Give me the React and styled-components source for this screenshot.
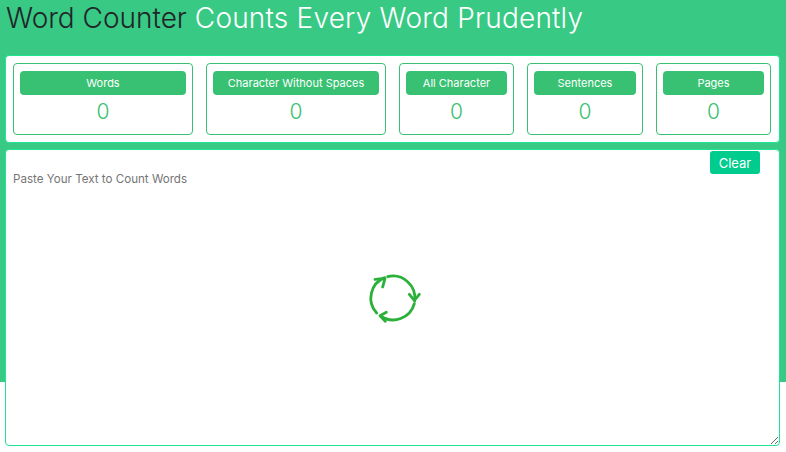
import React from "react";
import styled, { createGlobalStyle } from "styled-components";

const stats = ["Words", "Character Without Spaces", "All Character", "Sentences", "Pages"];

const App = () => {
    return (
        <Page>
            <GlobalStyle />
            <Title>
                Word Counter <TitleAccent>Counts Every Word Prudently</TitleAccent>
            </Title>
            <StatsPanel>
                {stats.map((label) => (
                    <StatCard key={label}>
                        <StatLabel>{label}</StatLabel>
                        <StatValue>0</StatValue>
                    </StatCard>
                ))}
            </StatsPanel>
            <Editor>
                <TextArea placeholder="Paste Your Text to Count Words" />
                <ClearButton>Clear</ClearButton>
                <Spinner viewBox="0 0 210 195" fill="none" stroke="#2bb03a" strokeWidth="8.5" strokeLinecap="round" strokeLinejoin="round">
                    <path d="M83 35A66 66 0 0 1 164 108" />
                    <path d="M148 88L163 106L178 88" />
                    <path d="M163 116A66 66 0 0 1 62 153" />
                    <path d="M79 142L60 152L76 169" />
                    <path d="M50 144A66 66 0 0 1 74 38" />
                    <path d="M45 43L75 40L68 66" />
                </Spinner>
            </Editor>
        </Page>
    );
};

const GlobalStyle = createGlobalStyle`
    body {
        margin: 0;
        background: #fff;
        font-family: "Inter", "Roboto", sans-serif;
    }
`;

const Page = styled.div`
    height: 452px;
    padding: 0 6px 0 5px;
    box-sizing: border-box;
    overflow: hidden;
    background: linear-gradient(#38c985 382px, #fff 382px);
`;

const Title = styled.h1`
    margin: 0;
    height: 55px;
    padding-left: 1px;
    font-size: 28px;
    line-height: 36px;
    font-weight: 300;
    color: #212529;
`;

const TitleAccent = styled.span`
    color: #fff;
    letter-spacing: 0.2px;
`;

const StatsPanel = styled.div`
    display: grid;
    grid-template-columns: 180px 180px 115px 116px 115px;
    gap: 13px;
    box-sizing: border-box;
    height: 88px;
    padding: 7px;
    background: #fff;
    border: 1px solid #1fe593;
    border-radius: 4px;
`;

const StatCard = styled.div`
    display: flex;
    flex-direction: column;
    align-items: stretch;
    padding: 7px 6px;
    border: 1px solid #38c172;
    border-radius: 4px;
`;

const StatLabel = styled.div`
    height: 24px;
    line-height: 24px;
    border-radius: 4px;
    background: #38c172;
    color: #fff;
    font-size: 11px;
    text-align: center;
    white-space: nowrap;
`;

const StatValue = styled.div`
    margin-top: 4px;
    font-size: 21px;
    line-height: 26px;
    font-weight: 300;
    color: #38c172;
    text-align: center;
`;

const Editor = styled.div`
    position: relative;
    margin-top: 6px;
    height: 297px;
`;

const TextArea = styled.textarea`
    display: block;
    width: 100%;
    height: 100%;
    box-sizing: border-box;
    padding: 21px 7px 6px;
    background: #fff;
    border: 1px solid #1fe593;
    border-radius: 4px;
    outline: none;
    font-family: inherit;
    font-size: 11.6px;
    line-height: 16px;
    color: #495057;
    &::placeholder {
        color: #757575;
        opacity: 1;
    }
`;

const ClearButton = styled.button`
    position: absolute;
    top: 2px;
    right: 20px;
    width: 50px;
    height: 23px;
    padding: 0;
    border: 0;
    border-radius: 3px;
    background: #00cc8e;
    color: #fff;
    font-family: inherit;
    font-size: 13px;
`;

const Spinner = styled.svg`
    position: absolute;
    left: 355px;
    top: 116px;
    width: 70px;
    height: 65px;
`;

export default App;
